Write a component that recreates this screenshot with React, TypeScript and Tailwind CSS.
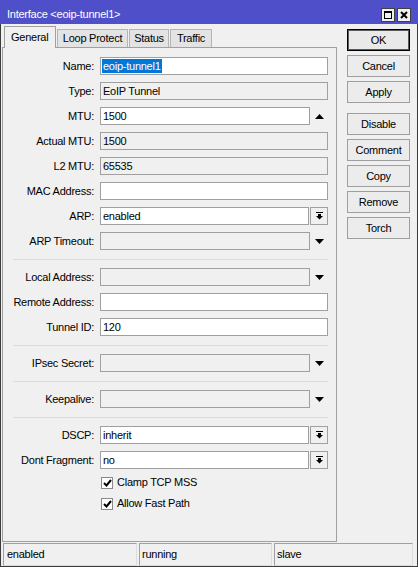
import React from "react";

const font = { fontFamily: '"Liberation Sans", Arial, sans-serif' };

function DownTri() {
  return (
    <svg width="9" height="5" viewBox="0 0 9 5">
      <polygon points="0,0 9,0 4.5,5" fill="#000" />
    </svg>
  );
}

function UpTri() {
  return (
    <svg width="9" height="5" viewBox="0 0 9 5">
      <polygon points="0,5 9,5 4.5,0" fill="#000" />
    </svg>
  );
}

function DropIcon() {
  return (
    <svg width="7" height="8" viewBox="0 0 7 8">
      <rect x="0" y="0" width="7" height="1" fill="#000" />
      <rect x="2" y="2" width="3" height="2" fill="#000" />
      <polygon points="0,4 7,4 3.5,7.5" fill="#000" />
    </svg>
  );
}

type FieldKind = "full" | "tri" | "up" | "drop";

function Field({
  value,
  ro,
  kind,
  selected,
}: {
  value?: string;
  ro?: boolean;
  kind: FieldKind;
  selected?: boolean;
}) {
  const w = kind === "full" ? "w-[228px]" : kind === "drop" ? "w-[209px]" : "w-[210px]";
  return (
    <div className="flex items-center h-[18px]">
      <div
        className={`${w} h-[18px] border border-[#a0a0a0] flex items-center pl-[1px] text-[11px] text-black ${
          ro ? "bg-[#f0f0f0]" : "bg-white"
        }`}
      >
        {selected ? (
          <span className="bg-[#0078d7] text-white px-[1px] leading-[14px]">{value}</span>
        ) : (
          <span className="pl-[1px] leading-[14px]">{value}</span>
        )}
      </div>
      {kind === "tri" && (
        <div className="w-[18px] h-[18px] flex items-center justify-center">
          <DownTri />
        </div>
      )}
      {kind === "up" && (
        <div className="w-[18px] h-[18px] flex items-center justify-center">
          <UpTri />
        </div>
      )}
      {kind === "drop" && (
        <div className="ml-[1px] w-[18px] h-[18px] border border-[#a0a0a0] bg-[#f0f0f0] flex items-center justify-center">
          <DropIcon />
        </div>
      )}
    </div>
  );
}

function Row({
  label,
  value,
  ro,
  kind = "full",
  selected,
}: {
  label: string;
  value?: string;
  ro?: boolean;
  kind?: FieldKind;
  selected?: boolean;
}) {
  return (
    <div className="flex items-center h-[18px]">
      <div className="w-[91px] text-right text-[11px] text-black whitespace-nowrap">{label}</div>
      <div className="ml-[6px]">
        <Field value={value} ro={ro} kind={kind} selected={selected} />
      </div>
    </div>
  );
}

function Sep() {
  return (
    <div className="h-[4px] pl-[10px] pt-[2px]">
      <div className="w-[315px] h-px bg-[#dcdcdc]" />
    </div>
  );
}

function Check({ label }: { label: string }) {
  return (
    <div className="flex items-center h-[13px]">
      <div className="ml-[98px] w-[12px] h-[12px] border border-[#8a8a8a] bg-white flex items-center justify-center">
        <svg width="9" height="8" viewBox="0 0 9 8">
          <polyline points="1,4 3.5,6.5 8,1" fill="none" stroke="#000" strokeWidth="2" />
        </svg>
      </div>
      <span className="ml-[4px] text-[11px] text-black">{label}</span>
    </div>
  );
}

function Btn({ label, def }: { label: string; def?: boolean }) {
  return (
    <div
      className={`w-[63px] h-[22px] flex items-center justify-center text-[11px] text-black ${
        def
          ? "border border-black bg-[#e9e9e9] shadow-[inset_0_0_0_1px_#5a5a5a]"
          : "border border-[#9e9e9e] bg-[#ececec]"
      }`}
    >
      {label}
    </div>
  );
}

export default function App() {
  return (
    <div
      className="w-[418px] h-[567px] bg-[#f0f0f0] flex flex-col overflow-hidden tracking-[-0.25px]"
      style={font}
    >
      {/* title bar */}
      <div className="h-[24px] bg-[#4f4fc9] flex items-center pt-[5px] pl-[7px] pr-[7px]">
        <span className="text-white text-[11px]">Interface &lt;eoip-tunnel1&gt;</span>
        <div className="ml-auto flex gap-[2px]">
          <div className="w-[14px] h-[14px] bg-[#f0f0f0] border border-[#404040] flex items-center justify-center">
            <svg width="8" height="8" viewBox="0 0 8 8">
              <rect x="0.5" y="0.5" width="7" height="7" fill="none" stroke="#000" />
              <rect x="0" y="0" width="8" height="2" fill="#000" />
            </svg>
          </div>
          <div className="w-[14px] h-[14px] bg-[#f0f0f0] border border-[#404040] flex items-center justify-center">
            <svg width="8" height="8" viewBox="0 0 8 8">
              <path d="M1 1 L7 7 M7 1 L1 7" stroke="#000" strokeWidth="2" />
            </svg>
          </div>
        </div>
      </div>

      <div className="flex-1 flex flex-col border-l border-r border-b border-[#3c3c3c] min-h-0">
        <div className="flex-1 flex min-h-0">
          {/* left column */}
          <div className="ml-[1px] w-[335px] flex flex-col pt-[2px]">
            <div className="h-[21px] flex items-end pl-[2px] gap-px relative z-10">
              <div className="w-[52px] h-[22px] -mb-px bg-[#f0f0f0] border-t border-l border-r border-[#a0a0a0] flex items-center pl-[6px] text-[11px] text-black">
                General
              </div>
              <div className="w-[71px] h-[18px] bg-[#e3e3e3] border-t border-l border-r border-[#b4b4b4] flex items-center justify-center text-[11px] text-black">
                Loop Protect
              </div>
              <div className="w-[40px] h-[18px] bg-[#e3e3e3] border-t border-l border-r border-[#b4b4b4] flex items-center justify-center text-[11px] text-black">
                Status
              </div>
              <div className="w-[42px] h-[18px] bg-[#e3e3e3] border-t border-l border-r border-[#b4b4b4] flex items-center justify-center text-[11px] text-black">
                Traffic
              </div>
            </div>
            <div className="flex-1 border border-[#a0a0a0] pt-[9px] flex flex-col gap-[7px]">
              <Row label="Name:" value="eoip-tunnel1" selected />
              <Row label="Type:" value="EoIP Tunnel" ro />
              <Row label="MTU:" value="1500" kind="up" />
              <Row label="Actual MTU:" value="1500" ro />
              <Row label="L2 MTU:" value="65535" ro />
              <Row label="MAC Address:" value="" />
              <Row label="ARP:" value="enabled" kind="drop" />
              <Row label="ARP Timeout:" value="" ro kind="tri" />
              <Sep />
              <Row label="Local Address:" value="" ro kind="tri" />
              <Row label="Remote Address:" value="" />
              <Row label="Tunnel ID:" value="120" />
              <Sep />
              <Row label="IPsec Secret:" value="" ro kind="tri" />
              <Sep />
              <Row label="Keepalive:" value="" ro kind="tri" />
              <Sep />
              <Row label="DSCP:" value="inherit" kind="drop" />
              <Row label="Dont Fragment:" value="no" kind="drop" />
              <div className="flex flex-col gap-[8px]">
                <Check label="Clamp TCP MSS" />
                <Check label="Allow Fast Path" />
              </div>
            </div>
          </div>

          {/* right column */}
          <div className="ml-[10px] pt-[5px] flex flex-col">
            <div className="flex flex-col gap-[4px]">
              <Btn label="OK" def />
              <Btn label="Cancel" />
              <Btn label="Apply" />
            </div>
            <div className="mt-[10px] flex flex-col gap-[4px]">
              <Btn label="Disable" />
              <Btn label="Comment" />
              <Btn label="Copy" />
              <Btn label="Remove" />
              <Btn label="Torch" />
            </div>
          </div>
        </div>

        {/* status bar */}
        <div className="h-[24px] pt-[1px] pl-[2px] flex gap-[2px]">
          <div className="w-[134px] h-[23px] border-t border-l border-[#a0a0a0] border-r border-b border-r-[#dcdcdc] border-b-[#dcdcdc] flex items-center pl-[3px] text-[11px] text-black">
            enabled
          </div>
          <div className="w-[133px] h-[23px] border-t border-l border-[#a0a0a0] border-r border-b border-r-[#dcdcdc] border-b-[#dcdcdc] flex items-center pl-[2px] text-[11px] text-black">
            running
          </div>
          <div className="w-[139px] h-[23px] border-t border-l border-[#a0a0a0] border-r border-b border-r-[#dcdcdc] border-b-[#dcdcdc] flex items-center pl-[2px] text-[11px] text-black">
            slave
          </div>
        </div>
      </div>
    </div>
  );
}
